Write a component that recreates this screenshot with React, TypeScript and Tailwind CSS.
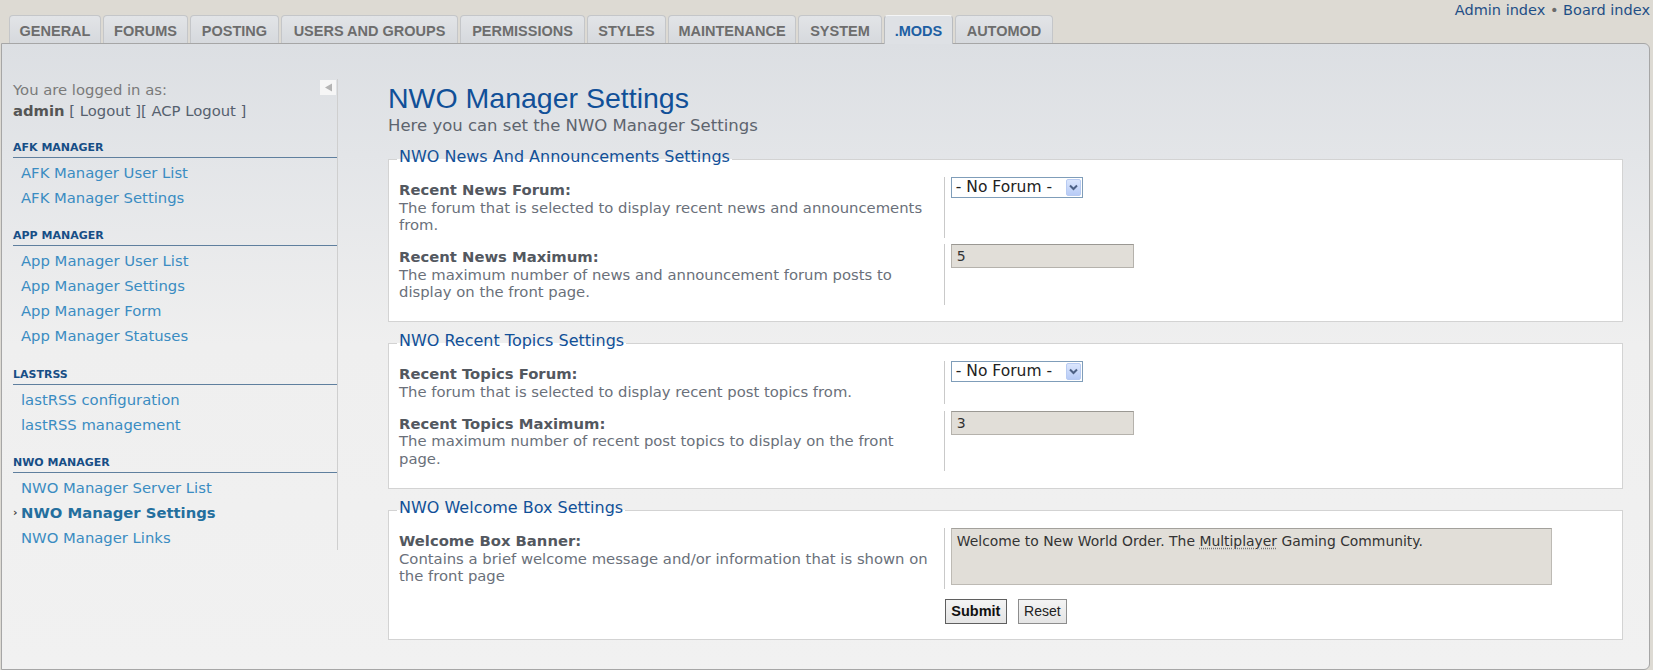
import React from 'react';

const tabs = [
  { label: 'GENERAL', w: 'w-[92px]' },
  { label: 'FORUMS', w: 'w-[85px]' },
  { label: 'POSTING', w: 'w-[89px]' },
  { label: 'USERS AND GROUPS', w: 'w-[177px]' },
  { label: 'PERMISSIONS', w: 'w-[125px]' },
  { label: 'STYLES', w: 'w-[79px]' },
  { label: 'MAINTENANCE', w: 'w-[128px]' },
  { label: 'SYSTEM', w: 'w-[84px]' },
  { label: '.MODS', w: 'w-[69px]', active: true },
  { label: 'AUTOMOD', w: 'w-[98px]' },
];

const menu = [
  { title: 'AFK MANAGER', items: ['AFK Manager User List', 'AFK Manager Settings'] },
  {
    title: 'APP MANAGER',
    items: ['App Manager User List', 'App Manager Settings', 'App Manager Form', 'App Manager Statuses'],
  },
  { title: 'LASTRSS', items: ['lastRSS configuration', 'lastRSS management'] },
  {
    title: 'NWO MANAGER',
    items: ['NWO Manager Server List', 'NWO Manager Settings', 'NWO Manager Links'],
  },
];

const Select = () => (
  <div className="flex h-[21px] w-[132px] items-center border border-[#7f9db9] bg-white pl-[4px] pr-[1px] font-['DejaVu_Sans'] text-[15.5px] leading-[19px] text-[#222]">
    <span className="flex-1">- No Forum -</span>
    <span className="flex h-[17px] w-[15px] items-center justify-center rounded-[2px] border border-[#b8cbf2] bg-[linear-gradient(180deg,#dbe6fd,#b7cbf6)]">
      <svg width="9" height="7" viewBox="0 0 9 7">
        <path d="M1 1.5 L4.5 5 L8 1.5" fill="none" stroke="#4d6185" strokeWidth="2" />
      </svg>
    </span>
  </div>
);

const TextInput = ({ value }: { value: string }) => (
  <div className="h-[24px] w-[183px] border border-[#b5b2ac] border-t-[#9a9893] bg-[#e1ded8] pl-[5px] text-[14px] leading-[22px] text-[#333]">
    {value}
  </div>
);

const Row = ({
  label,
  desc,
  children,
  first,
}: {
  label: string;
  desc: string;
  children: React.ReactNode;
  first?: boolean;
}) => (
  <dl className={`flex ${first ? '' : 'mt-[6.5px]'}`}>
    <dt className="w-[45%] shrink-0 border-r border-[#c9c9c9] py-[4px] pr-[10px] text-[14.8px] leading-[17.5px]">
      <label className="block font-bold text-[#53585f]">{label}</label>
      <span className="text-[#6a707a]">{desc}</span>
    </dt>
    <dd className="pl-[6px]">{children}</dd>
  </dl>
);

const Fieldset = ({
  legend,
  className,
  children,
}: {
  legend: string;
  className: string;
  children: React.ReactNode;
}) => (
  <fieldset className={`border border-[#d3d3d3] bg-white px-[10px] pt-[6.5px] ${className}`}>
    <legend className="-ml-[2px] px-[2px] pb-[5px] text-[16px] leading-[18px] text-[#115098]">{legend}</legend>
    {children}
  </fieldset>
);

const Sidebar = () => (
  <aside className="relative w-[325px] self-start border-r border-[#cfcfcf] text-[14.8px]">
    <div className="absolute right-[1px] top-[1px] flex h-[15px] w-[16px] items-center justify-center bg-[#f6f6f6]">
      <svg width="9" height="9" viewBox="0 0 9 9">
        <path d="M1 4.5 L8 0.5 L8 8.5 Z" fill="#b4b4b4" />
      </svg>
    </div>
    <div className="leading-[21px]">
      <p className="text-[#7a7a7a]">You are logged in as:</p>
      <p className="text-[#55606e]">
        <b className="text-[#555]">admin</b> [ Logout ][ ACP Logout ]
      </p>
    </div>
    {menu.map((section) => (
      <div key={section.title} className="mt-[18.5px]">
        <h3 className="border-b border-[#5f7f9e] pb-[1px] text-[11px] leading-[16px] font-bold text-[#174e86]">
          {section.title}
        </h3>
        <ul className="pt-[2px]">
          {section.items.map((item) => {
            const active = item === 'NWO Manager Settings';
            return (
              <li key={item} className="flex h-[25px] leading-[25px]">
                <span className="w-[8px] text-[11px] font-bold text-[#444]">{active ? '›' : ''}</span>
                <a className={active ? 'font-bold text-[#246f9e]' : 'text-[#3a8cc2]'}>{item}</a>
              </li>
            );
          })}
        </ul>
      </div>
    ))}
  </aside>
);

export default function App() {
  return (
    <div className="h-[670px] w-[1653px] overflow-hidden bg-[#dddad3] font-['DejaVu_Sans',sans-serif]">
      <div className="flex h-[15px] justify-end pr-[3px]">
        <p className="pt-[2px] text-[14.5px] leading-[16px] text-[#1f4f86]">
          Admin index <span className="text-[#6b6b6b]">•</span> Board index
        </p>
      </div>

      <div className="relative z-10 -mb-px flex h-[29px] items-start gap-[2px] pl-[9px]">
        {tabs.map((t) => (
          <div
            key={t.label}
            className={`${t.w} flex justify-center rounded-t-[4px] border border-b-0 pt-[7px] font-['Liberation_Sans',sans-serif] text-[14.5px] leading-[16px] font-bold ${
              t.active
                ? 'h-[29px] border-[#b9bcc0] border-t-[#f4f5f6] bg-[#dee1e5] text-[#1d5fa3]'
                : 'h-[28px] border-[#c4c6c9] bg-[linear-gradient(180deg,#e2e4e7,#d6d9dd)] text-[#6d6d6d]'
            }`}
          >
            {t.label}
          </div>
        ))}
      </div>

      <div className="ml-[1px] h-[627px] w-[1649px] rounded-tr-[6px] rounded-br-[6px] border border-[#a6a6a6] bg-[linear-gradient(180deg,#dcdfe3_0px,#e3e5e8_110px,#efefef_300px,#f1f1f1_627px)]">
        <div className="flex pl-[11px] pt-[35px]">
          <Sidebar />

          <main className="ml-[50px] w-[1235px] pt-[3px]">
            <h1 className="font-['Liberation_Sans',sans-serif] text-[28.5px] leading-[32px] text-[#115098]">
              NWO Manager Settings
            </h1>
            <p className="mt-[2px] text-[16.5px] leading-[19px] text-[#5d646e]">
              Here you can set the NWO Manager Settings
            </p>

            <Fieldset legend="NWO News And Announcements Settings" className="mt-[12.5px] pb-[16.5px]">
              <Row
                first
                label="Recent News Forum:"
                desc="The forum that is selected to display recent news and announcements from."
              >
                <Select />
              </Row>
              <Row
                label="Recent News Maximum:"
                desc="The maximum number of news and announcement forum posts to display on the front page."
              >
                <TextInput value="5" />
              </Row>
            </Fieldset>

            <Fieldset legend="NWO Recent Topics Settings" className="mt-[9.5px] pb-[16.5px]">
              <Row
                first
                label="Recent Topics Forum:"
                desc="The forum that is selected to display recent post topics from."
              >
                <Select />
              </Row>
              <Row
                label="Recent Topics Maximum:"
                desc="The maximum number of recent post topics to display on the front page."
              >
                <TextInput value="3" />
              </Row>
            </Fieldset>

            <Fieldset legend="NWO Welcome Box Settings" className="mt-[10px] pb-[15px]">
              <Row
                first
                label="Welcome Box Banner:"
                desc="Contains a brief welcome message and/or information that is shown on the front page"
              >
                <div className="h-[57px] w-[601px] border border-[#bdbab4] border-t-[#a3a19c] bg-[#e1ded8] pl-[5px] pt-[4px] text-[13.9px] leading-[17px] text-[#333]">
                  Welcome to New World Order. The{' '}
                  <span className="underline decoration-dotted decoration-[#777] underline-offset-2">Multiplayer</span>{' '}
                  Gaming Community.
                </div>
              </Row>
              <div className="ml-[45%] mt-[10.5px] flex gap-[11px] font-['Liberation_Sans',sans-serif]">
                <button className="h-[25px] w-[62px] border border-[#5f5f5f] bg-[linear-gradient(180deg,#f4f4f4,#e4e4e4)] text-[14.5px] font-bold text-[#111]">
                  Submit
                </button>
                <button className="h-[25px] w-[49px] border border-[#8d8d8d] bg-[linear-gradient(180deg,#f4f4f4,#e4e4e4)] text-[14px] text-[#222]">
                  Reset
                </button>
              </div>
            </Fieldset>
          </main>
        </div>
      </div>
    </div>
  );
}
